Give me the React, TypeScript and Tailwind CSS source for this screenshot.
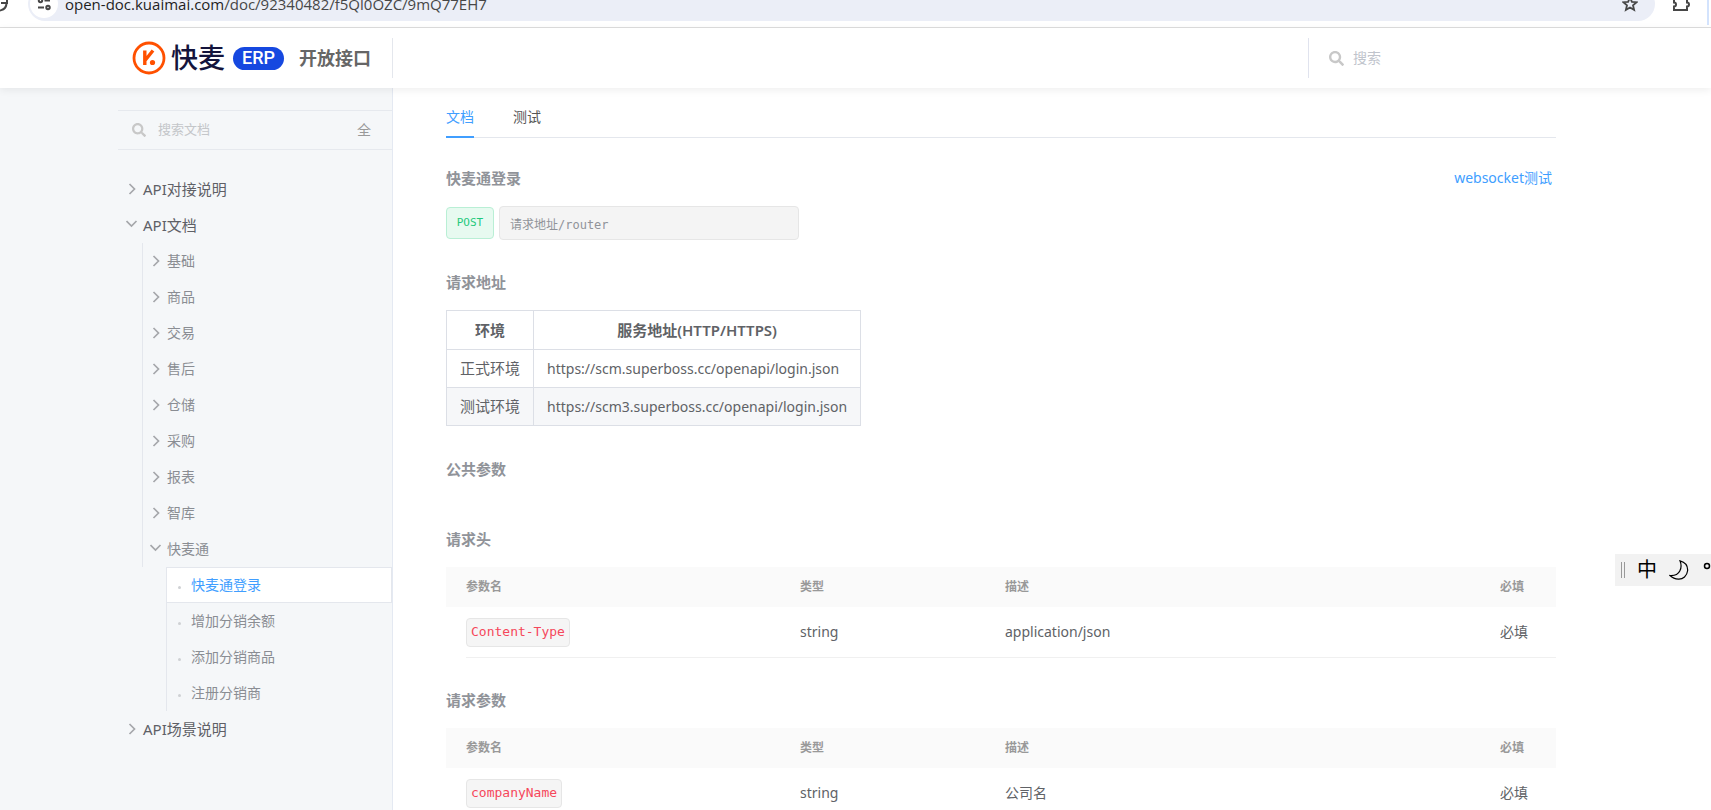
import React from 'react';
import { FaSearch } from 'react-icons/fa';

type TreeNode = {
  label: string;
  open?: boolean;
  active?: boolean;
  children?: TreeNode[];
};

const tree: TreeNode[] = [
  { label: 'API对接说明' },
  {
    label: 'API文档',
    open: true,
    children: [
      { label: '基础' },
      { label: '商品' },
      { label: '交易' },
      { label: '售后' },
      { label: '仓储' },
      { label: '采购' },
      { label: '报表' },
      { label: '智库' },
      {
        label: '快麦通',
        open: true,
        children: [
          { label: '快麦通登录', active: true },
          { label: '增加分销余额' },
          { label: '添加分销商品' },
          { label: '注册分销商' }
        ]
      }
    ]
  },
  { label: 'API场景说明' }
];

const environments = [
  { name: '正式环境', url: 'https://scm.superboss.cc/openapi/login.json' },
  { name: '测试环境', url: 'https://scm3.superboss.cc/openapi/login.json' }
];

const headerParams = [
  { name: 'Content-Type', type: 'string', desc: 'application/json', required: '必填' }
];

const requestParams = [
  { name: 'companyName', type: 'string', desc: '公司名', required: '必填' }
];

const Chevron: React.FC<{ open?: boolean }> = ({ open }) => (
  <svg className="h-3 w-3 shrink-0" viewBox="0 0 12 12" fill="none" stroke="#a5a7ab" strokeWidth="1.7">
    {open ? <path d="M.5 2l5 5 5-5" /> : <path d="M3.500 1l5 5-5 5" />}
  </svg>
);

const BrowserBar: React.FC = () => (
  <div className="flex h-7 shrink-0 items-end overflow-hidden border-b border-[#dedede] bg-white pb-1.5">
    <svg className="h-[34px] w-7 shrink-0" viewBox="0 0 28 34" fill="none" stroke="#474747" strokeWidth="2">
      <path d="M6.500 17a7.500 7.500 0 0 1-13 4" />
      <path d="M7 10v6H1" />
    </svg>
    <div className="flex h-[34px] flex-1 items-center rounded-full bg-[#ebeef7] pl-0.5 pr-[17px]">
      <span className="mr-[7px] flex h-7 w-7 items-center justify-center rounded-full bg-white">
        <svg className="h-4 w-4" viewBox="0 0 16 16" fill="none" stroke="#474747" strokeWidth="2">
          <circle cx="4.500" cy="4.500" r="1.700" />
          <path d="M8.500 4.500H14M2 11.500h6" />
          <circle cx="12" cy="11.500" r="1.700" />
        </svg>
      </span>
      <span className="font-['Open_Sans',sans-serif] text-[15px] leading-5 text-[#474747]">
        <span className="text-[#1f1f1f]">open-doc.kuaimai.com</span>/doc/92340482/f5Ql0OZC/9mQ77EH7
      </span>
      <svg className="ml-auto h-4 w-4" viewBox="0 0 16 16" fill="none" stroke="#474747" strokeWidth="1.8">
        <path d="M8 1.500l1.900 4.300 4.700.4-3.600 3.100 1.100 4.600L8 11.500l-4.100 2.400L5 9.300 1.400 6.200l4.700-.4z" />
      </svg>
    </div>
    <svg className="ml-4 h-[34px] w-5 shrink-0" viewBox="0 0 20 34" fill="none" stroke="#474747" strokeWidth="2">
      <path d="M3 11h4a2 2 0 0 1 4 0h5v4.500a2 2 0 0 1 0 4V23H3v-3.500a2 2 0 0 0 0-4z" />
    </svg>
    <span className="ml-4 mr-0.5 h-[25px] w-0.5 shrink-0 self-start bg-[#d3e3fd]" />
  </div>
);

const Logo: React.FC = () => (
  <div className="flex items-center">
    <svg className="h-[34px] w-[34px]" viewBox="0 0 34 34" fill="none">
      <circle cx="17" cy="17" r="15" stroke="#ff5000" strokeWidth="2.800" />
      <path d="M12.800 9.500v14.500M13 19.500l8-10" stroke="#ff5000" strokeWidth="3.400" />
      <circle cx="20.500" cy="21.500" r="2.600" fill="#ff5000" />
    </svg>
    <span className="ml-[5px] text-[27px] font-medium leading-8 text-[#14143c]">快麦</span>
    <span className="ml-2 flex h-[23px] w-[51px] items-center justify-center rounded-full bg-[#1648e0] font-['Roboto'] text-lg font-medium text-white">
      ERP
    </span>
  </div>
);

const Header: React.FC = () => (
  <header className="relative z-10 flex h-[60px] shrink-0 items-center bg-white shadow-[0_2px_8px_rgba(0,0,0,0.07)]">
    <div className="flex h-10 w-[393px] shrink-0 items-center border-r border-[#e4e7ed] pl-[132px]">
      <Logo />
      <span className="ml-[15px] text-lg font-bold text-[#666]">开放接口</span>
    </div>
    <label className="ml-auto mr-[118px] flex h-10 w-[285px] items-center border-l border-[#e0e3ee] pl-5">
      <FaSearch className="h-[15px] w-[15px] text-[#c8c8c8]" />
      <input
        type="text"
        aria-label="搜索"
        placeholder="搜索"
        className="ml-[9px] w-40 bg-transparent text-sm outline-none placeholder:text-[#c0c4cc]"
      />
    </label>
  </header>
);

const TreeTop: React.FC<{ node: TreeNode }> = ({ node }) => (
  <li>
    <button className="flex h-9 w-full items-center pl-2 text-[15px] text-[#5e6066]">
      <Chevron open={node.open} />
      <span className="ml-[5px]">{node.label}</span>
    </button>
    {node.children && (
      <ul>
        {node.children.map((child) => (
          <TreeBranch key={child.label} node={child} />
        ))}
      </ul>
    )}
  </li>
);

const TreeBranch: React.FC<{ node: TreeNode }> = ({ node }) => (
  <li className="pl-6">
    <button className="flex h-9 w-full items-center border-l border-[#e4e7ed] pl-[7px] text-sm text-[#8a8d93]">
      <Chevron open={node.open} />
      <span className="ml-[5px]">{node.label}</span>
    </button>
    {node.children && (
      <ul className="pl-6">
        {node.children.map((child) => (
          <li key={child.label}>
            <a
              href="#"
              className={
                child.active
                  ? 'flex h-9 items-center border border-[#e4e7ed] bg-white pl-[11px] text-sm text-[#409eff]'
                  : 'flex h-9 items-center border-l border-[#e4e7ed] pl-[11px] text-sm text-[#8a8d93]'
              }
            >
              <span className="mt-1 h-[3px] w-[3px] rounded-full bg-[#cfd1d4]" />
              <span className="ml-2.5">{child.label}</span>
            </a>
          </li>
        ))}
      </ul>
    )}
  </li>
);

const Sidebar: React.FC = () => (
  <aside className="w-[393px] shrink-0 border-r border-[#e4e9f2] bg-[#f5f7f9] pl-[118px] pt-[22px]">
    <div className="flex h-10 items-center border-y border-[#e6e9ee] pl-3.5 pr-[21px]">
      <FaSearch className="h-3.5 w-3.5 text-[#c8c8c8]" />
      <input
        type="text"
        aria-label="搜索文档"
        placeholder="搜索文档"
        className="ml-3 min-w-0 flex-1 bg-transparent text-[13px] outline-none placeholder:text-[#c4c6c9]"
      />
      <button className="text-sm text-[#999]">全</button>
    </div>
    <ul className="mt-[21px]">
      {tree.map((node) => (
        <TreeTop key={node.label} node={node} />
      ))}
    </ul>
  </aside>
);

const SectionTitle: React.FC<{ children: React.ReactNode }> = ({ children }) => (
  <h3 className="text-[15px] font-bold leading-5 text-[#909399]">{children}</h3>
);

const ParamTable: React.FC<{ rows: typeof headerParams }> = ({ rows }) => (
  <table className="mt-[18px] w-full table-fixed border-separate border-spacing-0 text-left">
    <colgroup>
      <col className="w-5" />
      <col className="w-[334px]" />
      <col className="w-[205px]" />
      <col />
      <col className="w-14" />
    </colgroup>
    <thead>
      <tr className="h-10 bg-[#fafafa] text-xs text-[#999]">
        <th />
        <th className="font-semibold">参数名</th>
        <th className="font-semibold">类型</th>
        <th className="font-semibold">描述</th>
        <th className="font-semibold">必填</th>
      </tr>
    </thead>
    <tbody>
      {rows.map((row) => (
        <tr key={row.name} className="h-[51px] text-sm text-[#606266]">
          <td />
          <td className="border-b border-[#f0f0f0]">
            <code className="flex h-[29px] w-fit items-center rounded border border-[#e6e6e6] bg-[#f5f5f5] px-1 font-['DejaVu_Sans_Mono','Noto_Sans_CJK_SC',monospace] text-[13px] text-[#f5475b]">
              {row.name}
            </code>
          </td>
          <td className="border-b border-[#f0f0f0]">{row.type}</td>
          <td className="border-b border-[#f0f0f0]">{row.desc}</td>
          <td className="border-b border-[#f0f0f0]">{row.required}</td>
        </tr>
      ))}
    </tbody>
  </table>
);

const Content: React.FC = () => (
  <main className="min-w-0 flex-1 pl-[53px] pr-[155px] pt-[9px]">
    <nav className="flex h-[41px] gap-[39px] border-b border-[#e4e7ed] text-sm">
      <a href="#" className="-mb-px flex items-center border-b-2 border-[#409eff] text-[#409eff]">文档</a>
      <a href="#" className="-mb-px flex items-center border-b-2 border-transparent text-[#555]">测试</a>
    </nav>

    <section className="mt-[30px]">
      <div className="flex items-center justify-between pr-1">
        <SectionTitle>快麦通登录</SectionTitle>
        <a href="#" className="text-sm text-[#409eff]">websocket测试</a>
      </div>
      <div className="mt-[18px] flex items-center gap-[5px] font-['DejaVu_Sans_Mono','Noto_Sans_CJK_SC',monospace]">
        <span className="flex h-8 w-12 items-center justify-center rounded border border-[#b9efd5] bg-[#e7faf0] text-[11px] text-[#1fc97d]">
          POST
        </span>
        <input
          type="text"
          readOnly
          aria-label="请求地址"
          value="请求地址/router"
          className="h-[34px] w-[300px] rounded border border-[#e6e6e6] bg-[#f4f4f4] px-2.5 text-xs text-[#909399] outline-none"
        />
      </div>
    </section>

    <section className="mt-8">
      <SectionTitle>请求地址</SectionTitle>
      <table className="mt-[18px] border-collapse text-[15px] text-[#606266]">
        <thead>
          <tr className="h-[39px]">
            <th className="border border-[#dcdfe6] px-[13px] font-semibold">环境</th>
            <th className="border border-[#dcdfe6] px-[13px] font-semibold">服务地址(HTTP/HTTPS)</th>
          </tr>
        </thead>
        <tbody>
          {environments.map((env) => (
            <tr key={env.name} className="h-[38px] even:bg-[#f6f7f9]">
              <td className="border border-[#dcdfe6] px-[13px]">{env.name}</td>
              <td className="border border-[#dcdfe6] px-[13px] text-sm">{env.url}</td>
            </tr>
          ))}
        </tbody>
      </table>
    </section>

    <section className="mt-[33px]">
      <SectionTitle>公共参数</SectionTitle>
    </section>

    <section className="mt-[50px]">
      <SectionTitle>请求头</SectionTitle>
      <ParamTable rows={headerParams} />
    </section>

    <section className="mt-8">
      <SectionTitle>请求参数</SectionTitle>
      <ParamTable rows={requestParams} />
    </section>
  </main>
);

// Floating input method bar, runs off the right edge of the window
const ImeBar: React.FC = () => (
  <div className="fixed right-0 top-[554px] z-20 flex h-8 w-24 items-center overflow-hidden bg-[#f2f2f2] pl-1.5 text-black">
    <span className="h-4 w-1 shrink-0 border-x border-[#999]" />
    <span className="ml-3 text-xl leading-8">中</span>
    <svg className="ml-3 h-5 w-5 shrink-0" viewBox="0 0 20 20" fill="none" stroke="currentColor" strokeWidth="1.200">
      <path d="M11 .8c5 1.400 8 5.200 7.600 10C18 16 14 19.400 9.500 19.200 6 19 3 17.500 1 15.500c4.500.3 8-1 9.800-4.500 1.700-3.200 1.600-6.700.2-10.200z" />
    </svg>
    <svg className="mb-2 ml-3 h-2 w-3 shrink-0" viewBox="0 0 12 8" fill="none" stroke="currentColor" strokeWidth="1.500">
      <circle cx="6" cy="4" r="2.500" />
    </svg>
  </div>
);

export default function App() {
  return (
    <div className="flex h-screen flex-col overflow-hidden bg-white font-['Noto_Sans','Noto_Sans_CJK_SC',sans-serif]">
      <BrowserBar />
      <Header />
      <div className="flex min-h-0 flex-1">
        <Sidebar />
        <Content />
      </div>
      <ImeBar />
    </div>
  );
}
